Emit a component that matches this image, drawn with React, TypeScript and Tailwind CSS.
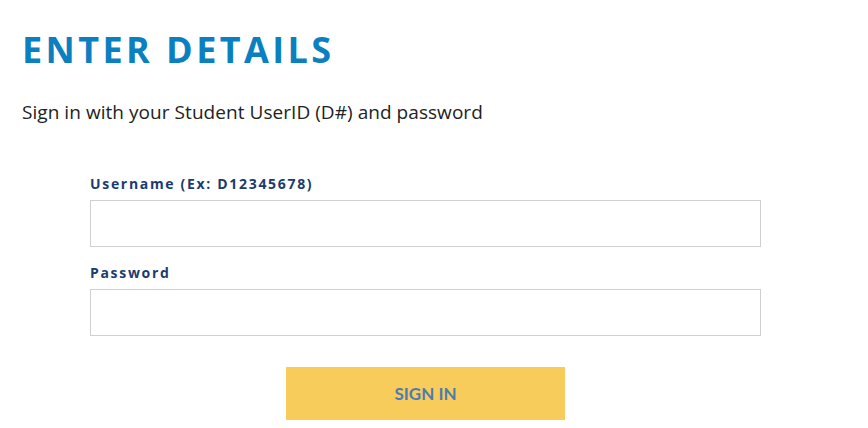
export default function App() {
  return (
    <div className="min-h-[428px] w-[868px] bg-white font-['Open_Sans',sans-serif]">
      <div className="px-[22px] pt-[30px]">
        <h1 className="text-[36px] font-bold leading-[40px] tracking-[0.095em] text-[#0a80c0]">
          ENTER DETAILS
        </h1>
        <p className="mt-[30px] text-[19px] leading-[24px] tracking-[0.05px] text-[#222]">
          Sign in with your Student UserID (D#) and password
        </p>
      </div>

      <form className="ml-[90px] mt-[51px] flex w-[671px] flex-col">
        <label className="text-[14px] font-bold leading-[18px] tracking-[0.12em] text-[#1b3b6f]">
          Username (Ex: D12345678)
        </label>
        <input type="text" className="mt-[7px] h-[47px] w-full border border-[#d0d0d0] bg-white" />

        <label className="mt-[17px] text-[14px] font-bold leading-[18px] tracking-[0.12em] text-[#1b3b6f]">
          Password
        </label>
        <input type="password" className="mt-[7px] h-[47px] w-full border border-[#d0d0d0] bg-white" />

        <button
          type="button"
          className="mx-auto mt-[31px] h-[53px] w-[279px] bg-[#f8cc5a] text-[17px] font-bold text-[#4d7bb3] font-['Lato',sans-serif]"
        >
          SIGN IN
        </button>
      </form>
    </div>
  )
}
